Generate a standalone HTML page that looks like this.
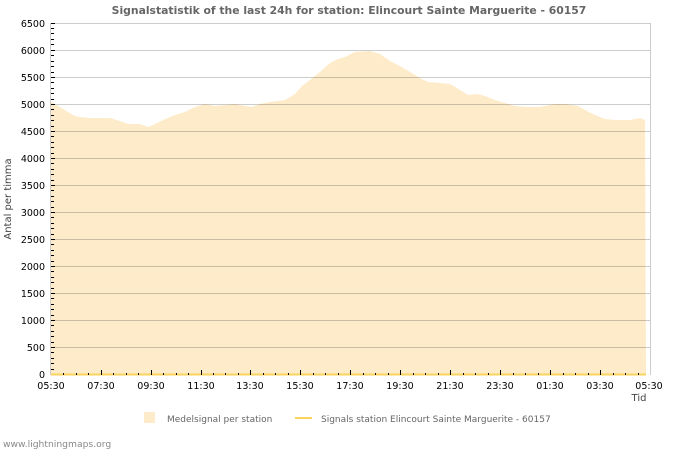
<!DOCTYPE html>
<html><head><meta charset="utf-8"><style>
body{margin:0;background:#fff;width:700px;height:450px;overflow:hidden}
svg text{font-family:"DejaVu Sans","Liberation Sans",sans-serif}
</style></head><body>
<svg width="700" height="450" viewBox="0 0 700 450" xmlns="http://www.w3.org/2000/svg">
<text x="349" y="14" text-anchor="middle" font-size="10.8" font-weight="bold" fill="#666">Signalstatistik of the last 24h for station: Elincourt Sainte Marguerite - 60157</text>
<path d="M51,375 L51,102 L60,107 L68,112 L75,116 L80,117 L90,118 L110,118 L120,121 L128,124 L140,124 L148,127 L155,124 L163,120 L175,115 L185,112 L195,107 L205,104 L215,106 L225,105 L235,104 L245,106 L252,107 L260,104 L270,102 L285,100 L295,94 L302,86 L310,80 L320,72 L330,63 L338,59 L345,57 L355,52 L370,51 L380,54 L390,61 L400,66 L410,72 L420,78 L428,82 L440,83 L450,84 L460,90 L468,95 L478,94 L485,96 L495,100 L505,103 L515,106 L525,107 L540,107 L555,104 L565,104 L578,106 L585,110 L595,115 L605,119 L615,120 L630,120 L640,118 L645,120 L646,375 Z" fill="#fdebc9"/>
<g stroke="#000" stroke-opacity="0.2" stroke-width="1">
<line x1="51" y1="23.5" x2="650" y2="23.5"/><line x1="51" y1="50.5" x2="650" y2="50.5"/><line x1="51" y1="77.5" x2="650" y2="77.5"/><line x1="51" y1="104.5" x2="650" y2="104.5"/><line x1="51" y1="131.5" x2="650" y2="131.5"/><line x1="51" y1="158.5" x2="650" y2="158.5"/><line x1="51" y1="185.5" x2="650" y2="185.5"/><line x1="51" y1="212.5" x2="650" y2="212.5"/><line x1="51" y1="239.5" x2="650" y2="239.5"/><line x1="51" y1="266.5" x2="650" y2="266.5"/><line x1="51" y1="293.5" x2="650" y2="293.5"/><line x1="51" y1="320.5" x2="650" y2="320.5"/><line x1="51" y1="347.5" x2="650" y2="347.5"/>
<line x1="650.5" y1="23" x2="650.5" y2="375"/><line x1="50.5" y1="23" x2="50.5" y2="375"/>
</g>
<line x1="51" y1="374.5" x2="646" y2="374.5" stroke="#fcd45c" stroke-width="2"/>
<g font-size="9.5" fill="#000" text-anchor="end">
<text x="45" y="27">6500</text><text x="45" y="54">6000</text><text x="45" y="81">5500</text><text x="45" y="108">5000</text><text x="45" y="135">4500</text><text x="45" y="162">4000</text><text x="45" y="189">3500</text><text x="45" y="216">3000</text><text x="45" y="243">2500</text><text x="45" y="270">2000</text><text x="45" y="297">1500</text><text x="45" y="324">1000</text><text x="45" y="351">500</text><text x="45" y="378">0</text>
</g>
<g font-size="9.5" fill="#000" text-anchor="middle">
<text x="51" y="389">05:30</text><text x="101" y="389">07:30</text><text x="151" y="389">09:30</text><text x="201" y="389">11:30</text><text x="250" y="389">13:30</text><text x="300" y="389">15:30</text><text x="350" y="389">17:30</text><text x="400" y="389">19:30</text><text x="450" y="389">21:30</text><text x="500" y="389">23:30</text><text x="550" y="389">01:30</text><text x="600" y="389">03:30</text><text x="649" y="389">05:30</text>
</g>
<text x="639" y="401" font-size="10" fill="#444" text-anchor="middle">Tid</text>
<text transform="translate(11,199) rotate(-90)" font-size="10" fill="#444" text-anchor="middle">Antal per timma</text>
<rect x="144" y="412" width="11" height="11" fill="#fdebc9"/>
<text x="167" y="422" font-size="9" fill="#666">Medelsignal per station</text>
<line x1="295" y1="418" x2="312" y2="418" stroke="#fcd45c" stroke-width="2"/>
<text x="321" y="422" font-size="9" fill="#666">Signals station Elincourt Sainte Marguerite - 60157</text>
<text x="3" y="447" font-size="9.2" fill="#888">www.lightningmaps.org</text>
<path d="M51,28.5h3M51,33.5h3M51,39.5h3M51,44.5h3M51,55.5h3M51,61.5h3M51,66.5h3M51,72.5h3M51,82.5h3M51,88.5h3M51,93.5h3M51,99.5h3M51,109.5h3M51,115.5h3M51,120.5h3M51,126.5h3M51,136.5h3M51,142.5h3M51,147.5h3M51,153.5h3M51,163.5h3M51,169.5h3M51,174.5h3M51,180.5h3M51,190.5h3M51,196.5h3M51,201.5h3M51,207.5h3M51,217.5h3M51,223.5h3M51,228.5h3M51,234.5h3M51,244.5h3M51,250.5h3M51,255.5h3M51,261.5h3M51,271.5h3M51,277.5h3M51,282.5h3M51,288.5h3M51,298.5h3M51,304.5h3M51,309.5h3M51,315.5h3M51,325.5h3M51,331.5h3M51,336.5h3M51,342.5h3M51,352.5h3M51,358.5h3M51,363.5h3M51,369.5h3M51,23.5h4M51,50.5h4M51,77.5h4M51,104.5h4M51,131.5h4M51,158.5h4M51,185.5h4M51,212.5h4M51,239.5h4M51,266.5h4M51,293.5h4M51,320.5h4M51,347.5h4" stroke="#000" stroke-width="1"/>
<path d="M76.5,373v2M126.5,373v2M176.5,373v2M225.5,373v2M275.5,373v2M325.5,373v2M375.5,373v2M425.5,373v2M475.5,373v2M525.5,373v2M575.5,373v2M625.5,373v2M63.5,373v2M88.5,373v2M113.5,373v2M138.5,373v2M163.5,373v2M188.5,373v2M213.5,373v2M238.5,373v2M263.5,373v2M288.5,373v2M313.5,373v2M338.5,373v2M363.5,373v2M388.5,373v2M413.5,373v2M438.5,373v2M463.5,373v2M488.5,373v2M513.5,373v2M538.5,373v2M563.5,373v2M588.5,373v2M613.5,373v2M638.5,373v2M101.5,370v5M151.5,370v5M201.5,370v5M250.5,370v5M300.5,370v5M350.5,370v5M400.5,370v5M450.5,370v5M500.5,370v5M550.5,370v5M600.5,370v5" stroke="#000" stroke-width="1"/>
</svg>
</body></html>
